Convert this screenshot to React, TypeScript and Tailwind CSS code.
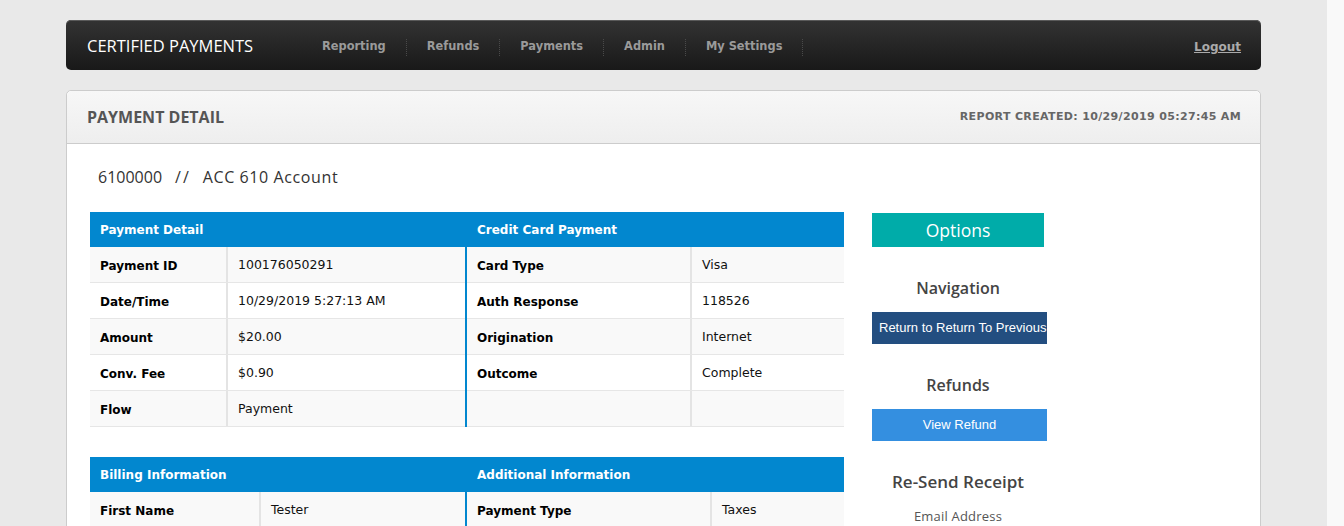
import React from 'react';

const verdana = { fontFamily: '"DejaVu Sans", Verdana, sans-serif' };
const humanist = { fontFamily: '"Open Sans", "Noto Sans", sans-serif' };
const arial = { fontFamily: '"Liberation Sans", Arial, sans-serif' };

type Row = [string, string];

const navItems = ['Reporting', 'Refunds', 'Payments', 'Admin', 'My Settings'];

const paymentRows: Row[] = [
  ['Payment ID', '100176050291'],
  ['Date/Time', '10/29/2019 5:27:13 AM'],
  ['Amount', '$20.00'],
  ['Conv. Fee', '$0.90'],
  ['Flow', 'Payment'],
];

const cardRows: Row[] = [
  ['Card Type', 'Visa'],
  ['Auth Response', '118526'],
  ['Origination', 'Internet'],
  ['Outcome', 'Complete'],
  ['', ''],
];

const DetailRows = ({ rows, labelWidth }: { rows: Row[]; labelWidth: string }) => (
  <div>
    {rows.map(([label, value], i) => (
      <div
        key={i}
        className={`flex h-[36px] border-b border-[#e6e6e6] ${i % 2 === 0 ? 'bg-[#f9f9f9]' : 'bg-white'}`}
      >
        <div className={`${labelWidth} shrink-0 flex items-center pl-[10px] pt-[2px] text-[12px] font-bold text-black border-r-2 border-[#e4e4e4]`}>
          {label}
        </div>
        <div className="flex-1 flex items-center pl-[10px] pt-[2px] text-[12.5px] text-[#111]">{value}</div>
      </div>
    ))}
  </div>
);

const DetailTable = ({
  leftTitle,
  rightTitle,
  leftRows,
  rightRows,
  leftLabel,
  rightLabel,
}: {
  leftTitle: string;
  rightTitle: string;
  leftRows: Row[];
  rightRows: Row[];
  leftLabel: string;
  rightLabel: string;
}) => (
  <div className="w-[754px]" style={verdana}>
    <div className="flex h-[35px] bg-[#0287cf] text-white text-[12px] font-bold">
      <div className="w-[377px] flex items-center pl-[10px]">{leftTitle}</div>
      <div className="flex-1 flex items-center pl-[10px]">{rightTitle}</div>
    </div>
    <div className="flex">
      <div className="w-[375px]">
        <DetailRows rows={leftRows} labelWidth={leftLabel} />
      </div>
      <div className="flex-1 border-l-2 border-[#0287cf]">
        <DetailRows rows={rightRows} labelWidth={rightLabel} />
      </div>
    </div>
  </div>
);

export default function App() {
  return (
    <div className="flex w-[1344px] min-h-screen">
      <div className="w-[1327px] bg-[#e9e9e9] pt-5 pb-10">
        <div className="w-[1195px] mx-auto">
          {/* top bar */}
          <div className="h-[50px] rounded-[5px] bg-gradient-to-b from-[#333333] to-[#191919] shadow-[inset_0_1px_0_#5a5a5a] flex items-center pl-[21px] pr-5 pt-[3px]">
            <div className="w-[215px] text-white text-[16.5px]" style={humanist}>
              CERTIFIED PAYMENTS
            </div>
            <ul className="flex items-center pt-[1px]" style={verdana}>
              {navItems.map((item) => (
                <li
                  key={item}
                  className="h-[17px] flex items-center px-5 border-r border-dotted border-[#4a4a4a] text-[11.4px] font-bold text-[#9a9a9a]"
                >
                  {item}
                </li>
              ))}
            </ul>
            <a className="ml-auto text-[12px] font-bold text-[#aaaaaa] underline" style={verdana}>
              Logout
            </a>
          </div>

          {/* panel */}
          <div className="mt-5 border border-[#cccccc] rounded-t-[5px] bg-white pb-10">
            <div className="h-[53px] rounded-t-[5px] border-b border-[#cccccc] bg-gradient-to-b from-[#f7f7f7] to-[#eeeeee] flex items-center justify-between pl-5 pr-[19px]">
              <h1 className="text-[16px] font-bold text-[#555555]" style={humanist}>
                PAYMENT DETAIL
              </h1>
              <span className="text-[11px] font-bold text-[#666666] tracking-[0.35px] pt-[1px]" style={verdana}>
                REPORT CREATED: 10/29/2019 05:27:45 AM
              </span>
            </div>

            <div className="pl-[23px] pt-[21px]">
              <div className="ml-2 flex text-[16px] leading-6 text-[#333333]" style={humanist}>
                <span>6100000</span>
                <span className="ml-[13px] mr-[12px] tracking-[2px]">//</span>
                <span className="tracking-[0.6px]">ACC 610 Account</span>
              </div>

              <div className="flex mt-[23px]">
                <div>
                  <DetailTable
                    leftTitle="Payment Detail"
                    rightTitle="Credit Card Payment"
                    leftRows={paymentRows}
                    rightRows={cardRows}
                    leftLabel="w-[138px]"
                    rightLabel="w-[225px]"
                  />
                  <div className="mt-[30px]">
                    <DetailTable
                      leftTitle="Billing Information"
                      rightTitle="Additional Information"
                      leftRows={[['First Name', 'Tester']]}
                      rightRows={[['Payment Type', 'Taxes']]}
                      leftLabel="w-[171px]"
                      rightLabel="w-[245px]"
                    />
                  </div>
                </div>

                <div className="ml-[28px] w-[172px] flex flex-col items-center" style={humanist}>
                  <div className="w-[172px] h-[34px] mt-[1px] bg-[#00aca9] text-white text-[17.5px] flex items-center justify-center pt-[1px]">
                    Options
                  </div>
                  <h2 className="mt-[29px] text-[16px] leading-6 font-semibold text-[#444444]">Navigation</h2>
                  <button
                    className="self-start mt-3 w-[175px] shrink-0 h-[32px] bg-[#234e80] text-white text-[13px] whitespace-nowrap pl-[7px] text-left"
                    style={arial}
                  >
                    Return to Return To Previous
                  </button>
                  <h2 className="mt-[29px] text-[16px] leading-6 font-semibold text-[#444444]">Refunds</h2>
                  <button
                    className="self-start mt-3 w-[175px] shrink-0 h-[32px] bg-[#348fe0] text-white text-[13px]"
                    style={arial}
                  >
                    View Refund
                  </button>
                  <h2 className="mt-[28px] text-[17px] leading-[26px] font-semibold text-[#444444]">Re-Send Receipt</h2>
                  <div className="mt-[11px] text-[13px] leading-5 text-[#555555] tracking-[0.2px]">Email Address</div>
                </div>
              </div>
            </div>
          </div>
        </div>
      </div>
      <div className="w-[17px] bg-[#f9f9f9]" />
    </div>
  );
}
